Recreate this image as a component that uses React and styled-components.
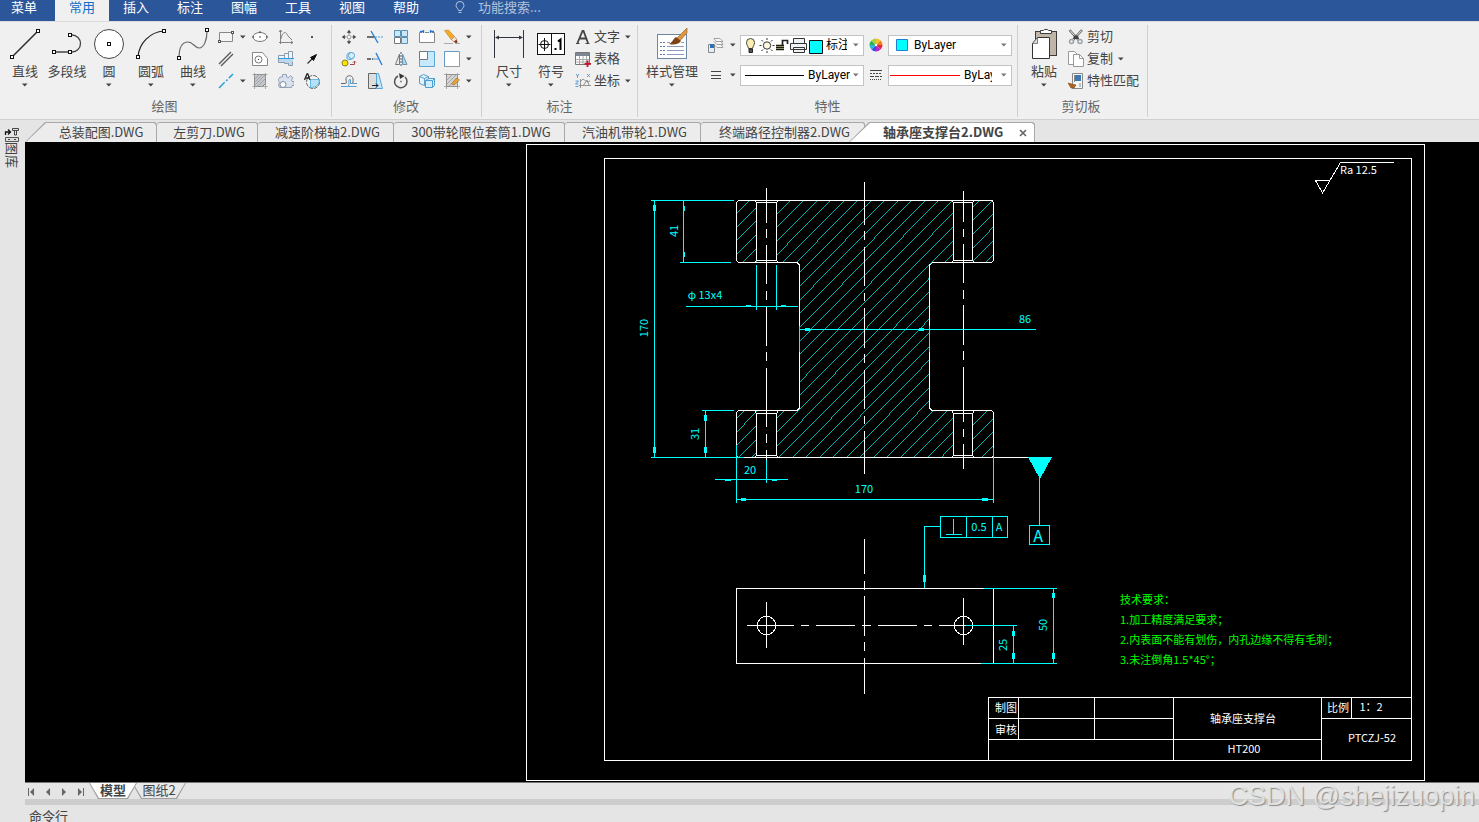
import React from 'react';
import styled, { createGlobalStyle, css } from 'styled-components';

const GlobalStyle = createGlobalStyle`
  * { box-sizing: border-box; }
  html, body { margin: 0; height: 100%; }
  body {
    font-family: "Noto Sans CJK SC", "Noto Sans", sans-serif;
    font-size: 13px;
    color: #444;
    background: #e5e5e5;
    overflow: hidden;
  }
  button, select, input { font: inherit; color: inherit; }
`;

const Page = styled.div`
  display: flex;
  flex-direction: column;
  height: 100vh;
  overflow: hidden;
`;

const plainButton = css`
  border: 0;
  padding: 0;
  margin: 0;
  background: none;
  cursor: pointer;
  white-space: nowrap;
`;

/* ---------- menu bar ---------- */
const MenuBar = styled.nav`
  display: flex;
  flex: none;
  height: 21px;
  background: #2b579a;
`;

const MenuItem = styled.button`
  ${plainButton}
  width: 54px;
  height: 21px;
  padding-bottom: 7px;
  line-height: 14px;
  color: ${(p) => (p.$active ? '#0f6fc6' : '#fff')};
  background: ${(p) => (p.$active ? '#f0f0f0' : 'transparent')};
  ${(p) => p.$main && 'width: 55px; padding-right: 7px;'}
`;

const SearchBox = styled.label`
  display: flex;
  align-items: center;
  gap: 13px;
  height: 14px;
  margin-left: 22px;
  color: #b4c2da;
`;

const SearchInput = styled.input`
  width: 120px;
  height: 14px;
  padding: 0;
  border: 0;
  outline: 0;
  background: transparent;
  line-height: 14px;
  &::placeholder { color: #b4c2da; opacity: 1; }
`;

/* ---------- ribbon ---------- */
const Ribbon = styled.header`
  display: flex;
  flex: none;
  height: 99px;
  padding-top: 3px;
  background: #f0f0f0;
  border-bottom: 1px solid #d0d0d0;
  border-top: 1px solid #dcdcdc;
`;

const Group = styled.section`
  display: flex;
  flex-direction: column;
  height: 92px;
  padding: 1px ${(p) => p.$right || 5}px 0 ${(p) => p.$left || 4}px;
  border-right: 1px solid #d0d0d0;
`;

const GroupBody = styled.div`
  display: flex;
  height: 68px;
`;

const GroupTitle = styled.h2`
  margin: 3px 0 0;
  font-size: 13px;
  font-weight: 400;
  line-height: 18px;
  text-align: center;
  color: #666;
`;

const BigButton = styled.button`
  ${plainButton}
  display: flex;
  flex-direction: column;
  align-items: center;
  width: ${(p) => (p.$wide ? 58 : 42)}px;
  padding-top: 2px;
  line-height: 18px;
  svg { flex: none; }
`;

const BigLabel = styled.span`
  height: 18px;
  margin: 2px 0 3px;
`;

const Tools = styled.div`
  display: grid;
  grid-template-columns: ${(p) => p.$cols};
  grid-auto-rows: 22px;
`;

const Tool = styled.button`
  ${plainButton}
  display: flex;
  align-items: center;
  justify-content: ${(p) => (p.$menu ? 'flex-start' : 'center')};
  gap: ${(p) => (p.$menu ? 6 : 0)}px;
  padding-left: ${(p) => (p.$menu ? 4 : 0)}px;
`;

const TextTools = styled.div`
  display: flex;
  flex-direction: column;
  padding-left: 3px;
`;

const TextTool = styled.button`
  ${plainButton}
  display: flex;
  align-items: center;
  gap: 3px;
  height: 22px;
  line-height: 18px;
  span { padding-bottom: 2px; }
  svg:last-child:not(:first-child) { margin-left: 2px; }
`;

const PropertyGrid = styled.div`
  display: grid;
  grid-template-columns: 32px 124px 24px 124px;
  grid-auto-rows: 30px;
  align-items: center;
  padding: 4px 0 0 7px;
`;

const Combo = styled.label`
  display: flex;
  align-items: center;
  height: 21px;
  padding: 0 4px 0 ${(p) => (p.$flush ? 1 : 4)}px;
  gap: ${(p) => p.$gap || 0}px;
  background: #fff;
  border: 1px solid #c3c3c3;
  color: #000;
  svg { flex: none; }
`;

const ComboSelect = styled.select`
  appearance: none;
  flex: 1;
  min-width: 0;
  height: 19px;
  padding: 0;
  margin: 0 ${(p) => (p.$clip ? 6 : 0)}px 0 1px;
  border: 0;
  outline: 0;
  overflow: hidden;
  background: transparent;
  font-family: Roboto, "Noto Sans CJK SC", sans-serif;
  font-size: 12px;
`;

/* ---------- work area ---------- */
const Body = styled.div`
  display: flex;
  flex: 1;
  min-height: 0;
`;

const SideBar = styled.aside`
  flex: none;
  width: 25px;
  padding: 7px 0 0 4px;
  background: #e5e5e5;
`;

const SideTab = styled.button`
  ${plainButton}
  display: flex;
  flex-direction: column;
  align-items: center;
  width: 16px;
  span {
    writing-mode: vertical-rl;
    text-orientation: sideways;
    line-height: 16px;
  }
`;

const Main = styled.main`
  display: flex;
  flex: 1;
  flex-direction: column;
  min-width: 0;
`;

const DocTabs = styled.div`
  display: flex;
  flex: none;
  align-items: flex-end;
  height: 22px;
`;

const DocTab = styled.button`
  ${plainButton}
  position: relative;
  width: ${(p) => p.$width}px;
  height: 20px;
  padding-bottom: 2px;
  line-height: 17px;
  padding-left: ${(p) => (p.$slant ? 20 : 4)}px;
  border: solid #a8a8a8;
  border-width: 1px 1px 0 0;
  border-radius: 3px 3px 0 0;
  background: #ececec;
  z-index: 0;
  ${(p) =>
    p.$slant &&
    css`
      border: 0;
      background: none;
      &::before, &::after {
        content: "";
        position: absolute;
        z-index: -1;
        inset: 0;
        background: #a8a8a8;
        clip-path: polygon(0 100%, 20px 0, calc(100% - 2px) 0, 100% 2px, 100% 100%);
      }
      &::after {
        inset: 1px 1px 0 1px;
        background: ${p.$active ? '#fff' : '#ececec'};
      }
    `}
  ${(p) =>
    p.$active &&
    css`
      margin-left: -16px;
      padding-left: 34px;
      text-align: left;
      font-weight: 700;
      z-index: 1;
    `}
`;

const CloseMark = styled.span`
  display: inline-flex;
  margin-left: 16px;
`;

const Canvas = styled.div`
  display: flex;
  flex: 1;
  min-height: 0;
  background: #000;
  svg { flex: 1; min-width: 0; }
`;

const SheetBar = styled.div`
  display: flex;
  flex: none;
  height: 17px;
  border-top: 1px solid #777;
`;

const NavButton = styled.button`
  ${plainButton}
  display: flex;
  align-items: center;
  justify-content: flex-start;
  width: 16px;
  height: 17px;
  padding-left: 2px;
`;

const SheetTab = styled.button`
  ${plainButton}
  position: relative;
  z-index: ${(p) => (p.$active ? 1 : 0)};
  width: ${(p) => (p.$active ? 48 : 54)}px;
  margin-left: ${(p) => (p.$active ? 0 : -5)}px;
  height: 16px;
  padding-bottom: 3px;
  line-height: 13px;
  font-weight: ${(p) => (p.$active ? 700 : 400)};
  &::before, &::after {
    content: "";
    position: absolute;
    z-index: -1;
    inset: 0;
    background: #a0a0a0;
    clip-path: polygon(0 0, 100% 0, calc(100% - 9px) 100%, 9px 100%);
  }
  &::after {
    inset: 0 1px 1px 1px;
    background: ${(p) => (p.$active ? '#fff' : '#e9e9e9')};
  }
`;

const Splitter = styled.div`
  flex: none;
  height: 6px;
  background: #cdcdcd;
`;

const CommandLine = styled.div`
  flex: none;
  height: 17px;
  padding: 2px 0 0 4px;
  line-height: 18px;
  overflow: hidden;
`;

const Watermark = styled.div`
  position: absolute;
  right: 4px;
  bottom: 9px;
  font-family: "Liberation Sans", sans-serif;
  font-size: 27px;
  line-height: 34px;
  color: rgba(236, 236, 236, 0.85);
  text-shadow: 1px 1px 1px #8c8c8c;
  pointer-events: none;
`;

/* ---------- icons ---------- */
const Svg = ({ w = 16, h = w, vb, children }) => (
  <svg width={w} height={h} viewBox={vb || `0 0 ${w} ${h}`} fill="none" stroke="#555" strokeWidth="1" aria-hidden="true">
    {children}
  </svg>
);

const Caret = ({ color = '#444' }) => (
  <svg width="6" height="4" viewBox="0 0 6 4" aria-hidden="true">
    <path d="M0 .5h5.6L2.8 3.6z" fill={color} />
  </svg>
);

const Node = ({ x, y }) => <rect x={x - 1.5} y={y - 1.5} width="3" height="3" fill="#fff" stroke="#111" />;

const big = {
  line: (
    <Svg w={30} h={32}>
      <path d="M2 29L28 3" stroke="#333" strokeWidth="1.600" />
      <Node x={2} y={29} /><Node x={28} y={3} />
    </Svg>
  ),
  polyline: (
    <Svg w={30} h={32}>
      <path d="M2 24H20A8.500 8.500 0 0 0 20 7h-2" stroke="#444" strokeWidth="1.300" />
      <Node x={2} y={24} /><Node x={18} y={24} /><Node x={18} y={7} />
    </Svg>
  ),
  circle: (
    <Svg w={30} h={32}>
      <circle cx="15" cy="16" r="14.500" fill="#fff" stroke="#444" />
      <Node x={15} y={16} />
    </Svg>
  ),
  arc: (
    <Svg w={30} h={32}>
      <path d="M2 29C3 15 14 4 28 3" stroke="#222" strokeWidth="1.200" />
      <Node x={2} y={29} /><Node x={28} y={3} />
    </Svg>
  ),
  curve: (
    <Svg w={32} h={32}>
      <path d="M2 30C2 18 6 14 11 14s7 6 11 6c5 0 8-8 8-17" stroke="#666" strokeWidth="1.200" />
      <Node x={2} y={30} /><Node x={30} y={2} />
    </Svg>
  ),
  dimension: (
    <Svg w={30} h={32}>
      <path d="M.5 2v28M29.500 2v28M2 9.500h26" stroke="#2f3440" />
      <path d="M1 9.500l4-2v4zM29 9.500l-4-2v4z" fill="#2f3440" stroke="none" />
    </Svg>
  ),
  symbol: (
    <Svg w={30} h={32}>
      <rect x="1.500" y="5.500" width="27" height="21" fill="#fff" stroke="#111" />
      <path d="M15.500 5v22M2.500 16.500h12M8.500 10v13" stroke="#111" />
      <circle cx="8.500" cy="16.500" r="4" stroke="#111" />
      <path d="M18.500 20h2v2h-2z" fill="#000" stroke="none" />
      <path d="M22 13.500l2.500-2V22" stroke="#000" strokeWidth="2" />
    </Svg>
  ),
  styles: (
    <Svg w={32} h={32}>
      <rect x="1.500" y="6.500" width="29" height="24" fill="#fff" stroke="#6d87a3" />
      <path d="M4 14.500h5M4 18.500h5M4 22.500h5M4 26.500h5" stroke="#5b7fa8" strokeDasharray="2 1" />
      <path d="M11 14.500h3M11 18.500h17M11 22.500h17M11 26.500h17M25 14.500h3" stroke="#8c9bc0" />
      <path d="M31 0L19 12l3 3L31 5z" fill="#dc9642" stroke="#8c5a22" strokeWidth=".6" />
      <path d="M20 9l5 4c-3 4-8 4-12 3 3-1 4-5 7-7z" fill="#7a4516" stroke="none" />
    </Svg>
  ),
  paste: (
    <Svg w={30} h={32}>
      <rect x="6.500" y="3.500" width="21" height="24" fill="#bfb5a8" stroke="#3c3c3c" />
      <path d="M11.500 5.500v-3h3c0-1.500 5-1.500 5 0h3v3z" fill="#fff" stroke="#3c3c3c" />
      <path d="M3.500 15.500l5-6h12v21h-17z" fill="#fff" stroke="#333" />
      <path d="M8.500 9.500v6h-5z" fill="#ddd" stroke="#555" strokeWidth=".7" />
    </Svg>
  ),
};

const small = {
  rect: <Svg><path d="M1.500 3.500h13v9h-13z" fill="#f4f4f4" stroke="#888" /><rect x=".5" y="11.500" width="2" height="2" fill="#fff" /><rect x="13.500" y="2.500" width="2" height="2" fill="#fff" /></Svg>,
  ellipse: <Svg><ellipse cx="8" cy="8" rx="7" ry="4.500" fill="#fff" stroke="#777" /><path d="M7.500 3h1M.5 8h1M7.500 8h1M14.500 8h1" stroke="#222" strokeWidth="1.500" /></Svg>,
  func: <Svg><path d="M2.500 1v14M1 13.500h14M3 10C4.500 2 8 2 10 7l4 4M1 3l1.500-2L4 3M13 12l2 1.500-2 1.500" stroke="#777" strokeWidth=".9" /></Svg>,
  point: <Svg><rect x="7" y="7" width="2" height="2" fill="#555" stroke="none" /></Svg>,
  parallel: <Svg><path d="M1 13L13 1M3 15L15 3" stroke="#555" strokeWidth="1.300" /></Svg>,
  hole: <Svg><path d="M.5 1.500h10l5 6v7H.5z" fill="#fff" stroke="#888" /><circle cx="6.500" cy="8.500" r="3.500" stroke="#777" /><path d="M6 8.500h1" stroke="#222" /></Svg>,
  bolt: <Svg><path d="M.5 4.500h6v7h-6zM6.500 2.500h4v10h-4zM10.500.5h4v14h-4z" fill="#eef6fb" stroke="#8a9cad" /><path d="M1 8h14v3h-1v3h-3v-2H7v-1H1z" fill="#bcd6ee" stroke="none" /><path d="M0 7.500h16" stroke="#2b9fe4" /></Svg>,
  arrow: <Svg><path d="M3.500 12.500l5-5" stroke="#333" strokeWidth="1.300" /><path d="M12.500 3.500l-6 3 3 3z" fill="#111" stroke="#111" /></Svg>,
  center: <Svg><path d="M1 15L15 1" stroke="#2b9fdc" strokeWidth="1.500" strokeDasharray="8 2 2 2" /></Svg>,
  hatch: <Svg><path d="M2.500 1.500h11v9l-3 3h-8z" fill="#c4c8cc" stroke="#777" /><path d="M.5 1.500h15M.5 13.500h15M2.500 0v16M13.500 0v16M3 6l4-4M3 9l7-7M3 12l10-10M6 13l7-7" stroke="#999" strokeWidth=".8" /></Svg>,
  gear: <Svg><path d="M4.500 4V1.500h4V4l2.500.5 1.500-2 2.500 2.500-1.500 2 .5 1.500h2v4h-2l-.5 2H1.500L.5 12l1-2.500L0 7l2-3z" fill="#d9e1ee" stroke="#8292a8" strokeWidth=".8" /><circle cx="5" cy="11.500" r="3" fill="#fff" stroke="#7f8ea3" /></Svg>,
  region: <Svg><circle cx="9" cy="9" r="6.500" fill="#f4f4f4" stroke="#666" strokeDasharray="4 1" /><path d="M6.500 6.500h8.500c1 4-2 8-8.500 8z" fill="#b5e2f8" stroke="#4cacdc" strokeWidth=".8" /><path d="M.5 7L3 .8h.8L6 7M1.500 5h4" stroke="#222" strokeWidth="1.300" /></Svg>,
  move: <Svg><path d="M8 3v2.500M8 10.500V13M3 8h2.500M10.500 8H13" stroke="#777" strokeWidth="1.200" /><path d="M8 .8l2.200 3H5.800zM8 15.200l2.200-3H5.800zM.8 8l3-2.200v4.400zM15.200 8l-3-2.200v4.400z" fill="#444" stroke="none" /><path d="M6.500 6.500h3v3h-3z" stroke="#aaa" fill="#fff" /></Svg>,
  trim: <Svg><path d="M0 8h7" stroke="#444" strokeWidth="1.500" /><path d="M4 2l7 12" stroke="#2b7fd0" strokeWidth="1.400" /><path d="M8 8h8" stroke="#4a9ad8" strokeDasharray="2 1" /></Svg>,
  extend: <Svg><path d="M0 8h6" stroke="#444" strokeWidth="1.500" strokeDasharray="4 1" /><path d="M6 8h5" stroke="#4a9ad8" /><path d="M9 2l6 12" stroke="#2b7fd0" strokeWidth="1.400" /></Svg>,
  array: <Svg><path d="M1.500 1.500h6v6h-6zM8.500 1.500h6v6h-6zM8.500 8.500h6v6h-6z" fill="#c7e9fb" stroke="#5a8fb4" /><path d="M1.500 8.500h6v6h-6z" fill="#fff" stroke="#777" /></Svg>,
  breakLine: <Svg><path d="M3 3.500H.5v10h15v-10H13M6 3.500h4" fill="#fdfdfd" stroke="#888" /><path d="M1 2.500h4M11 2.500h4M4.500 1v3M11.500 1v3" stroke="#2474d0" strokeWidth="1.300" /></Svg>,
  pencil: <Svg><path d="M.5 1.500l4-.5 6 6.500-3 3.500z" fill="#f6ab26" stroke="#c98a2c" strokeWidth=".7" /><path d="M7.500 10.500l3-3 2.500 3-3 2.500z" fill="#ede2d6" stroke="#a9734a" strokeWidth=".6" /><path d="M10 12.500l2.500-2 1 2c0 1.500-1 2-2 2z" fill="#8c3f22" stroke="none" /><path d="M0 14.500h9M12 14.500h4" stroke="#999" strokeWidth=".8" /></Svg>,
  copy: <Svg><path d="M6 6a3.500 3.500 0 1 1 3 2.500C6.500 9 5.500 7.500 6 6z" fill="#c6e8fa" stroke="#5aa5d4" /><circle cx="10.500" cy="4.500" r="3" fill="#d8f0fc" stroke="#5aa5d4" /><circle cx="4" cy="12" r="3" fill="#f7e400" stroke="#8a8420" /><path d="M9 13.500h4.500v-3M12 11.500l1.500-1.500 1.500 1.500" stroke="#9c3434" strokeWidth=".9" /></Svg>,
  mirror: <Svg><path d="M6.500 3v10.500h-4z" fill="#eee" stroke="#777" /><path d="M9.500 3v10.500h4.500z" fill="#a9d4ee" stroke="#6a94ae" /><path d="M8 1v14" stroke="#555" strokeDasharray="2 1" /></Svg>,
  scale: <Svg><path d="M.5.5h15v15H.5z" fill="#c7e9fb" stroke="#5aa5d4" /><path d="M.5.5h8v8h-8z" fill="#fff" stroke="#777" /></Svg>,
  box: <Svg><path d="M.5.5h15v15H.5z" fill="#fff" stroke="#999" /><path d="M.5 15.500V.5h15" stroke="#4a9ad8" strokeDasharray="2 1" /></Svg>,
  offset: <Svg><path d="M0 10.500h4.500c2 0 0-3 .5-5 .5-3.500 6-4 7 0 .5 2-1 5 .5 5H16" stroke="#666" /><path d="M0 13.500h15.500M7.500 13c1-2 0-4 .5-6 .5-1 1.500-1 1.500 0v3.500h6" stroke="#5a9fce" /></Svg>,
  stretch: <Svg><path d="M1.500.5h8v15h-8z" fill="#dedede" stroke="#666" /><path d="M9.500.5h2l4 15h-6z" fill="#c2e5f8" stroke="#5aa5d4" /><path d="M5 12.500h6M9 10.500l2 2-2 2" stroke="#222" /></Svg>,
  rotate: <Svg><path d="M5 3a6.200 6.200 0 1 0 7 1" stroke="#555" strokeWidth="1.500" /><path d="M6 .3l5.500 2.700L7 6z" fill="#333" stroke="none" /><path d="M7.500 8.500h1" stroke="#222" strokeWidth="1.500" /></Svg>,
  block: <Svg><path d="M.5 3.500l4-2 5 2v7l-4 2-5-2zM.5 3.500l5 2 4-2M5.500 5.500v7" stroke="#5a9fce" fill="#e4f2fb" /><path d="M6.500 7.500l3-2h6v7l-2 2h-7zM6.500 7.500h7l2-2M13.500 7.500v7" fill="#d2ecfa" stroke="#4a9fd0" /></Svg>,
  editHatch: <Svg><path d="M2.500 1.500h11v12h-11z" fill="#d4d4d4" stroke="#777" /><path d="M0 1.500h16M0 13.500h16M2.500 0v16M13.500 0v16M3 7l5-5M3 11l9-9M5 13L13 5" stroke="#999" strokeWidth=".8" /><path d="M7.500 11l5-6 3 2-5.500 5z" fill="#eaa336" stroke="#9a6a22" strokeWidth=".6" /></Svg>,
  text: <Svg><path d="M2.500 14L7.500 2h1L13 14M4.500 9.500h7" stroke="#444" strokeWidth="1.800" /><path d="M1 14.500h3.500M10.500 14.500h4" stroke="#444" /></Svg>,
  table: <Svg><path d="M.5 1.500h14v12H.5z" fill="#fff" stroke="#777" /><path d="M1 2h13v3H1z" fill="#7d8794" stroke="none" /><path d="M1 8.500h13M1 11h13M4.500 5v8M8 5v8M11.500 5v8" stroke="#aaa" /><path d="M12.500 9.500v6.500M9.500 12.800h6.500" stroke="#c2142b" strokeWidth="1.800" /></Svg>,
  coord: <Svg><path d="M5.500 6v9M4 12.500h12M6 8c3-5 4 3 9 0M8 13l4-6 2 5" stroke="#888" strokeWidth=".9" /><path d="M1 1l1.500 2L4 1M2.500 3v2M12 1l3 3M15 1l-3 3M.5 8h3l-3 3h3M.5 13.500h3" stroke="#4a93d0" strokeWidth=".9" /></Svg>,
  layers: <Svg><path d="M6 1.500h6l3 3H8zM6 4.500l3 3h6l-2-3M6 7.500l3 3h6l-2-3" fill="#f7f7f7" stroke="#999" strokeWidth=".9" /><path d="M.5 7.500h6v8h-6z" fill="#e6eef6" stroke="#888" /><path d="M2 7h4v4H2z" fill="#2c72b8" stroke="none" /></Svg>,
  lines: <Svg><path d="M3 4.500h10M3 8.500h10M3 11.500h10" stroke="#444" strokeWidth="1.200" /></Svg>,
  linetype: <Svg w={14}><path d="M1 2.500h12" stroke="#444" /><path d="M1 5.500h12" stroke="#444" strokeDasharray="2 1" /><path d="M1 8.500h12" stroke="#444" strokeDasharray="4 1" /><path d="M1 11.500h12" stroke="#444" strokeDasharray="1 1" /></Svg>,
  cut: <Svg><path d="M1.500 1l9 10M14 1L5 11" stroke="#666" strokeWidth="2.400" /><path d="M2 1.500l9 10M13.500 1.500L5 11" stroke="#fff" strokeWidth=".9" /><path d="M6 6.500h4l1 3.500H5z" fill="#444" stroke="none" /><circle cx="3.500" cy="12.500" r="2" stroke="#9aa1ae" strokeWidth="1.500" /><circle cx="12" cy="12.500" r="2" stroke="#9aa1ae" strokeWidth="1.500" /></Svg>,
  duplicate: <Svg><path d="M.5.5h6l3 3v10h-9z" fill="#fff" stroke="#999" /><path d="M5.500 3.500h6l4 4v8h-10z" fill="#fff" stroke="#999" /><path d="M11.500 3.500v4h4" stroke="#999" /></Svg>,
  match: <Svg><path d="M4.500.5h10v15h-10z" fill="#f4f7fa" stroke="#888" /><path d="M7 2h6v6H7z" fill="#3c78b4" stroke="none" /><path d="M6.500 2v7M12 10v4" stroke="#888" /><path d="M0 10l4 1 4 1-2 3H3z" fill="#b1651f" stroke="#7a4516" strokeWidth=".6" /></Svg>,
};

const wheelSlices = ['#f2c230', '#ef7f1a', '#e5263a', '#b22bd1', '#3a4fe0', '#27b5dd', '#2fb34a', '#a6d437'];
const ColorWheel = () => (
  <Svg w={14}>
    {wheelSlices.map((c, i) => {
      const a = (i * Math.PI) / 4 - Math.PI / 2;
      const b = a + Math.PI / 4;
      return <path key={c} stroke="none" fill={c} d={`M7 7L${7 + 6.5 * Math.cos(a)} ${7 + 6.5 * Math.sin(a)}A6.500 6.500 0 0 1 ${7 + 6.5 * Math.cos(b)} ${7 + 6.5 * Math.sin(b)}z`} />;
    })}
    <circle cx="7" cy="7" r="1.200" fill="#fff" stroke="none" />
  </Svg>
);

const LayerState = () => (
  <Svg w={80} h={17}>
    <path d="M3.500 11.500C3 9 1.500 8 1.500 5.500a4 4 0 0 1 8 0c0 2.500-1.500 3.500-2 6z" fill="#fdeeb0" stroke="#444" />
    <path d="M4 12h3.500v3.500H4z" fill="#555" stroke="#222" />
    <circle cx="22" cy="8.500" r="3.700" fill="#fff8e0" stroke="#333" />
    <path d="M22 1v2M22 14v2M14.500 8.500h2M27.500 8.500h2M16.500 3l1.500 1.500M26 12.500l1.500 1.500M27.500 3L26 4.500M18 12.500L16.500 14" stroke="#333" />
    <path d="M31 8.500h8M31 10.500h8M31 12.500h8" stroke="#1c1c00" strokeWidth="1.600" />
    <path d="M37.500 8V3.500h5V7" stroke="#222" strokeWidth="1.700" />
    <path d="M48.500 6V1.500h11V6M45.500 6.500h16v6h-16zM48.500 10.500h11v5h-11z" fill="#eef1f6" stroke="#333" />
    <path d="M64.500 3.500h13v13h-13z" fill="#0ff" stroke="#111" />
  </Svg>
);

const Bulb = () => (
  <Svg w={10} h={13}>
    <path d="M3.500 9.500C3.500 7.500 1 7 1 4.500a4 4 0 0 1 8 0c0 2.500-2.500 3-2.500 5zM3.500 11.500h3" stroke="#b4c2da" />
  </Svg>
);

/* ---------- technical drawing ---------- */
const CadText = styled.text`
  font-family: "Liberation Sans Narrow", "Noto Sans CJK SC", sans-serif;
  font-size: ${(p) => p.$size || 11}px;
  fill: ${(p) => p.$color || '#fff'};
  stroke: none;
`;

const V = (x, ...ys) => ys.reduce((d, y, i) => d + (i % 2 ? `V${y}` : `M${x} ${y}`), '');
const H = (y, ...xs) => xs.reduce((d, x, i) => d + (i % 2 ? `H${x}` : `M${x} ${y}`), '');

const outline =
  'M738.500 200.500H992L993.500 202.500V260.500L991.500 262.500H932.500L929.500 265V408L932 410.500H991.500L993.500 412.500V455.500L992 457.500H738.500L736.500 455.500V412.500L738.500 410.500H797L799.500 408V265L797 262.500H738.500L736.500 260.500V202.500z';
const holes = [
  [757, 200, 20, 63],
  [954, 200, 19, 63],
  [757, 410, 20, 48],
  [954, 410, 19, 48],
];
const holePath = holes.map(([x, y, w, h]) => `M${x} ${y}h${w}v${h}h-${w}z`).join('');
const hatchLines = Array.from({ length: 38 }, (_, k) => {
  const x = 749 + 13.51 * k;
  return `M${x} 201L${x - 253.3} 457`;
}).join('');

const arrowHeads = [
  [653, 205, 3, 6], [653, 447, 3, 6], [683, 206, 2, 5], [683, 252, 2, 5],
  [704, 415, 3, 6], [704, 447, 3, 6], [746, 305, 5, 2], [781, 305, 5, 2],
  [805, 328, 5, 3], [919, 328, 5, 3], [725, 479, 6, 2], [772, 479, 5, 2],
  [741, 498, 5, 3], [982, 498, 6, 3], [923, 575, 3, 7], [1052, 593, 3, 5],
  [1052, 653, 3, 6], [1012, 631, 3, 5], [1012, 653, 3, 6],
];

const dimensionLines = [
  V(654.5, 200, 458), H(200.5, 651, 734), H(457.5, 651, 744),
  V(683.5, 200, 263), H(262.5, 680, 731),
  V(705.5, 410, 458), H(410.5, 702, 734),
  V(756.5, 265, 310), V(776.5, 265, 310), H(306.5, 686, 798),
  H(329.5, 799, 1036), V(799.5, 326, 352), V(929.5, 326, 352),
  H(479.5, 715, 788), V(766.5, 460, 483),
  H(499.5, 736, 994), V(736.5, 445, 503), V(993.5, 448, 503),
  V(1039.5, 478, 525), 'M1029.500 525.500h20v19h-20z',
  'M940.500 516.500h67v21h-67z', V(966.5, 516, 538), V(992.5, 516, 538),
  V(953.5, 519, 534), H(534.5, 946, 962), 'M940 526.500H924.500V588',
  H(588.5, 984, 1057), H(663.5, 981, 1057), V(1053.5, 588, 664),
  V(1013.5, 625, 664), H(625.5, 966, 1017),
].join('');

const centerLines = [
  V(766.5, 188, 223, 229, 238, 245, 284, 291, 300, 307, 346, 352, 361, 368, 427, 434, 443, 450, 460),
  V(963.5, 191, 222, 229, 237, 244, 283, 290, 299, 305, 345, 351, 360, 367, 422, 429, 437, 444, 469),
  V(864.5, 182, 225, 231, 240, 247, 286, 293, 301, 308, 348, 354, 363, 370, 409, 416, 424, 431, 474),
  V(864.5, 539, 574, 581, 590, 596, 636, 642, 651, 658, 694),
  H(625.5, 747, 794, 801, 809, 816, 855, 862, 871, 878, 917, 924, 932, 939, 966),
  V(766.5, 602, 648), V(963.5, 598, 645),
].join('');

const frames = [
  'M526.500 144.500H1424.500V780.500H526.500z', 'M604.500 158.500H1411.500V760.500H604.500z',
  H(697.5, 988, 1411), H(718.5, 988, 1173, 1321, 1411), H(739.5, 988, 1321),
  V(988.5, 697, 760), V(1018.5, 697, 739), V(1094.5, 697, 739),
  V(1173.5, 697, 760), V(1321.5, 697, 760), V(1351.5, 697, 718),
].join('');

const holeEdges = [
  [756.5, 202.5, 20, 58], [953.5, 202.5, 19, 58],
  [756.5, 413.5, 20, 42], [953.5, 413.5, 19, 42],
];

const cyanTexts = [
  ['φ 13x4', 705, 299], ['86', 1025, 323], ['20', 750, 474], ['170', 864, 493],
  ['0.5', 979, 531], ['A', 999, 531],
];
const rotatedTexts = [['41', 678, 231], ['170', 648, 328], ['31', 699, 434], ['25', 1007, 645], ['50', 1047, 625]];
const blockTexts = [
  ['制图', 1006, 712], ['审核', 1006, 734], ['轴承座支撑台', 1243, 723],
  ['比例', 1338, 712], ['1：2', 1371, 711],
];
const notes = ['技术要求：', '1.加工精度满足要求；', '2.内表面不能有划伤，内孔边缘不得有毛刺；', '3.未注倒角1.5*45°；'];

const Drawing = () => (
  <svg viewBox="25 142 1454 640" fill="none" stroke="#fff" shapeRendering="crispEdges" role="img" aria-label="轴承座支撑台">
    <defs>
      <clipPath id="section">
        <path d={outline + holePath} clipRule="evenodd" />
      </clipPath>
    </defs>
    <path d={hatchLines} stroke="#0ff" strokeWidth=".7" clipPath="url(#section)" />
    <path d={frames} />
    <path d={outline} />
    <path d="M992 457.500H1029M736.500 588.500H993.500V663.500H736.500z" />
    {holeEdges.map(([x, y, w, h]) => (
      <React.Fragment key={`${x}-${y}`}>
        <rect x={x} y={y} width={w} height={h} />
        <path d={`M${x - 1.5} ${y - 2}l1.500 2M${x + w + 1.5} ${y - 2}l-1.500 2M${x - 1.5} ${y + h + 2}l1.500-2M${x + w + 1.5} ${y + h + 2}l-1.500-2`} />
      </React.Fragment>
    ))}
    <circle cx="766.500" cy="625.500" r="9.200" />
    <circle cx="963.500" cy="625.500" r="9.200" />
    <path d={dimensionLines} stroke="#0ff" />
    <path d={centerLines} />
    {arrowHeads.map(([x, y, w, h]) => (
      <rect key={`${x}-${y}`} x={x} y={y} width={w} height={h} fill="#0ff" stroke="none" />
    ))}
    <path d="M1028 457h24l-12 22z" fill="#0ff" stroke="none" />
    <path d="M1330 180.500h-14.500l7 12.500 18-30.500h53" />
    {cyanTexts.map(([t, x, y]) => (
      <CadText key={t} x={x} y={y} $color="#0ff" textAnchor="middle">{t}</CadText>
    ))}
    <CadText x="1038" y="542" $size={16} $color="#0ff" textAnchor="middle">A</CadText>
    {rotatedTexts.map(([t, x, y]) => (
      <CadText key={t} $color="#0ff" textAnchor="middle" transform={`translate(${x} ${y}) rotate(-90)`}>{t}</CadText>
    ))}
    <CadText x="1340" y="174">Ra 12.5</CadText>
    {blockTexts.map(([t, x, y]) => (
      <CadText key={t} x={x} y={y} textAnchor="middle">{t}</CadText>
    ))}
    <CadText x="1244" y="753" textAnchor="middle">HT200</CadText>
    <CadText x="1372" y="742" textAnchor="middle">PTCZJ-52</CadText>
    {notes.map((t, i) => (
      <CadText key={t} x="1120" y={604 + i * 20} $color="#0f0">{t}</CadText>
    ))}
  </svg>
);

/* ---------- data ---------- */
const menus = ['菜单', '常用', '插入', '标注', '图幅', '工具', '视图', '帮助'];
const drawBig = [['直线', 'line', 1], ['多段线', 'polyline', 0], ['圆', 'circle', 1], ['圆弧', 'arc', 1], ['曲线', 'curve', 1]];
const drawTools = ['rect+', 'ellipse', 'func', 'point', 'parallel', 'hole', 'bolt', 'arrow', 'center+', 'hatch', 'gear', 'region'];
const editTools = ['move', 'trim', 'array', 'breakLine', 'pencil+', 'copy', 'extend', 'mirror', 'scale', 'box+', 'offset', 'stretch', 'rotate', 'block', 'editHatch+'];
const docs = [
  ['总装配图.DWG', 132], ['左剪刀.DWG', 101], ['减速阶梯轴2.DWG', 136],
  ['300带轮限位套筒1.DWG', 171], ['汽油机带轮1.DWG', 136], ['终端路径控制器2.DWG', 164],
];

const Big = ({ label, icon, menu = true, wide }) => (
  <BigButton $wide={wide}>
    {big[icon]}
    <BigLabel>{label}</BigLabel>
    {menu ? <Caret /> : null}
  </BigButton>
);

const ToolSet = ({ items, cols }) => (
  <Tools $cols={cols}>
    {items.map((item) => {
      const menu = item.endsWith('+');
      const name = item.replace('+', '');
      const inMenuColumn = item === 'parallel';
      return (
        <Tool key={item} $menu={menu || inMenuColumn} aria-label={name}>
          {small[name]}
          {menu && <Caret />}
        </Tool>
      );
    })}
  </Tools>
);

const Labeled = ({ icon, label, menu }) => (
  <TextTool>
    {small[icon]}
    <span>{label}</span>
    {menu && <Caret />}
  </TextTool>
);

const MenuIcon = styled.button`
  ${plainButton}
  display: flex;
  align-items: center;
  gap: 6px;
`;

const WheelCell = styled.span`
  display: flex;
  justify-content: center;
`;

const NavArrow = ({ back, end }) => (
  <Svg w={9} h={8}>
    <path d={back ? 'M7 0v8L3 4z' : 'M3 0v8l4-4z'} fill="#666" stroke="none" />
    {end && <path d={back ? 'M1.500 0v8' : 'M8.500 0v8'} stroke="#666" />}
  </Svg>
);

export default function App() {
  return (
    <Page>
      <GlobalStyle />
      <MenuBar>
        {menus.map((m, i) => (
          <MenuItem key={m} $main={i === 0} $active={i === 1}>{m}</MenuItem>
        ))}
        <SearchBox>
          <Bulb />
          <SearchInput placeholder="功能搜索..." aria-label="功能搜索" />
        </SearchBox>
      </MenuBar>

      <Ribbon>
        <Group $right={6}>
          <GroupBody>
            {drawBig.map(([label, icon, menu]) => (
              <Big key={icon} label={label} icon={icon} menu={!!menu} />
            ))}
            <ToolSet items={drawTools} cols="33px 26px 26px 26px" />
          </GroupBody>
          <GroupTitle>绘图</GroupTitle>
        </Group>
        <Group>
          <GroupBody>
            <ToolSet items={editTools} cols="26px 26px 26px 26px 36px" />
          </GroupBody>
          <GroupTitle>修改</GroupTitle>
        </Group>
        <Group $left={6} $right={6}>
          <GroupBody>
            <Big label="尺寸" icon="dimension" />
            <Big label="符号" icon="symbol" />
            <TextTools>
              <Labeled icon="text" label="文字" menu />
              <Labeled icon="table" label="表格" />
              <Labeled icon="coord" label="坐标" menu />
            </TextTools>
          </GroupBody>
          <GroupTitle>标注</GroupTitle>
        </Group>
        <Group $left={5}>
          <GroupBody>
            <Big label="样式管理" icon="styles" wide />
            <PropertyGrid>
              <MenuIcon aria-label="图层">{small.layers}<Caret /></MenuIcon>
              <Combo>
                <LayerState />
                <ComboSelect aria-label="图层" $clip><option>标注层</option></ComboSelect>
                <Caret color="#777" />
              </Combo>
              <WheelCell><ColorWheel /></WheelCell>
              <Combo>
                <Svg w={20} h={13}><path d="M3.500.5h11v11h-11z" fill="#0ff" stroke="#1b7fd4" /></Svg>
                <ComboSelect aria-label="颜色"><option>ByLayer</option></ComboSelect>
                <Caret color="#777" />
              </Combo>
              <MenuIcon aria-label="线宽">{small.lines}<Caret /></MenuIcon>
              <Combo $gap={3}>
                <Svg w={59} h={3}><path d="M0 1.500h59" stroke="#000" /></Svg>
                <ComboSelect aria-label="线宽"><option>ByLayer</option></ComboSelect>
                <Caret color="#777" />
              </Combo>
              <WheelCell>{small.linetype}</WheelCell>
              <Combo $gap={3} $flush>
                <Svg w={70} h={3}><path d="M0 1.500h70" stroke="#f00" /></Svg>
                <ComboSelect aria-label="线型" $clip><option>ByLayer</option></ComboSelect>
                <Caret color="#777" />
              </Combo>
            </PropertyGrid>
          </GroupBody>
          <GroupTitle>特性</GroupTitle>
        </Group>
        <Group $left={5} $right={8}>
          <GroupBody>
            <Big label="粘贴" icon="paste" />
            <TextTools>
              <Labeled icon="cut" label="剪切" />
              <Labeled icon="duplicate" label="复制" menu />
              <Labeled icon="match" label="特性匹配" />
            </TextTools>
          </GroupBody>
          <GroupTitle>剪切板</GroupTitle>
        </Group>
      </Ribbon>

      <Body>
        <SideBar>
          <SideTab>
            <Svg w={16} h={15}>
              <path d="M1.500 8V5h4M4 2.500L6.500 5 4 7.500" stroke="#111" strokeWidth="1.300" />
              <path d="M8.500 1.500h6v2h-6zM10.500 4v4h2V4" stroke="#444" />
              <path d="M1.500 10.500h13v4h-13z" stroke="#555" fill="#ddd" />
              <path d="M4 12.500h2M10 12.500h2" stroke="#444" />
            </Svg>
            <span>图库</span>
          </SideTab>
        </SideBar>
        <Main>
          <DocTabs>
            {docs.map(([name, width], i) => (
              <DocTab key={name} $width={width} $slant={i === 0}>{name}</DocTab>
            ))}
            <DocTab $width={186} $slant $active>
              轴承座支撑台2.DWG
              <CloseMark>
                <Svg w={8}><path d="M1 1l6 6M7 1L1 7" stroke="#666" strokeWidth="1.700" /></Svg>
              </CloseMark>
            </DocTab>
          </DocTabs>
          <Canvas>
            <Drawing />
          </Canvas>
          <SheetBar>
            <NavButton aria-label="第一页"><NavArrow back end /></NavButton>
            <NavButton aria-label="上一页"><NavArrow back /></NavButton>
            <NavButton aria-label="下一页"><NavArrow /></NavButton>
            <NavButton aria-label="最后一页"><NavArrow end /></NavButton>
            <SheetTab $active>模型</SheetTab>
            <SheetTab>图纸2</SheetTab>
          </SheetBar>
          <Splitter />
          <CommandLine>命令行</CommandLine>
        </Main>
      </Body>
      <Watermark>CSDN @shejizuopin</Watermark>
    </Page>
  );
}
